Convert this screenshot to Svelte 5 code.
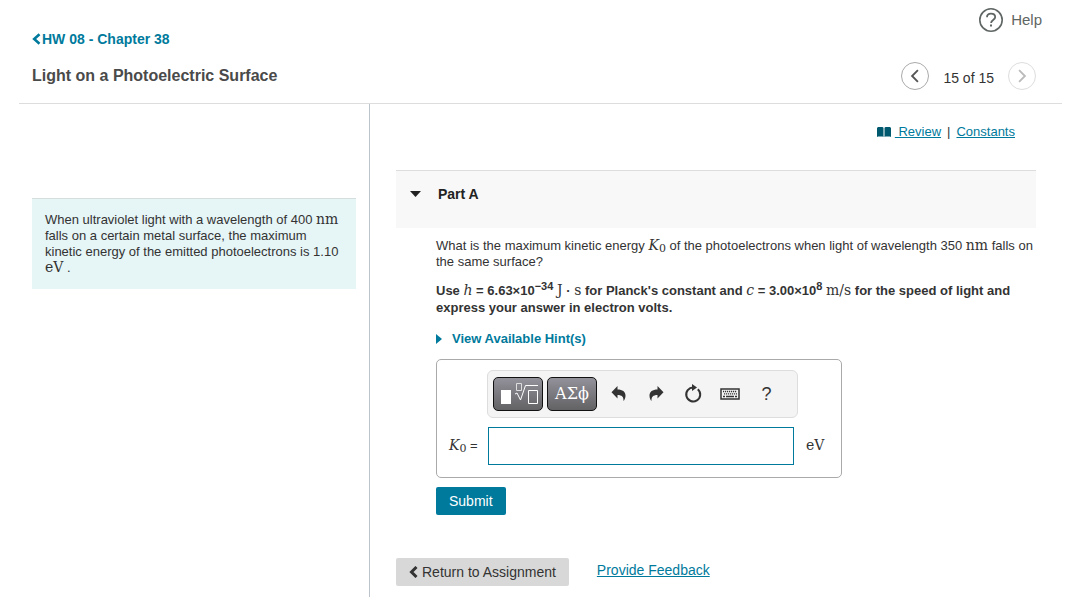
<!--
	Assignment item page: header with item navigation, problem statement on the
	left and the answer form for Part A on the right.
-->
<script lang="ts">
	let answer = $state('');
	let open = $state(true);
</script>

{#snippet chevron(dir: 'left' | 'right', size: number, width: number)}
	<svg class="chevron" width={size} height={size} viewBox="0 0 12 12" aria-hidden="true">
		<path
			d={dir === 'left' ? 'M8.500 1 3.500 6l5 5' : 'M3.500 1l5 5-5 5'}
			fill="none"
			stroke="currentColor"
			stroke-width={width}
		/>
	</svg>
{/snippet}

<div class="page">
	<header class="header">
		<div class="header__titles">
			<a class="back" href="#assignment">
				<svg width="10" height="12" viewBox="0 0 10 12" aria-hidden="true">
					<path d="M7.500 1.200 2.200 6l5.300 4.800" fill="none" stroke="currentColor" stroke-width="2.600" />
				</svg>
				HW 08 - Chapter 38
			</a>
			<h1>Light on a Photoelectric Surface</h1>
		</div>
		<div class="header__side">
			<a class="help" href="#help">
				<svg width="24" height="24" viewBox="0 0 24 24" aria-hidden="true">
					<circle cx="12" cy="12" r="11.200" fill="none" stroke="currentColor" stroke-width="1.600" />
					<path
						d="M8 9.200C8 6.900 9.600 5.600 12 5.600s4.200 1.300 4.200 3.400c0 2.900-4.100 3.100-4.100 6"
						fill="none"
						stroke="currentColor"
						stroke-width="1.800"
					/>
					<path d="M11 16.600h2v2h-2z" fill="currentColor" />
				</svg>
				Help
			</a>
			<nav class="pager" aria-label="Items">
				<button class="pager__btn" aria-label="Previous item">{@render chevron('left', 14, 1.6)}</button>
				<span class="pager__count">15 of 15</span>
				<button class="pager__btn" aria-label="Next item" disabled>
					{@render chevron('right', 14, 1.6)}
				</button>
			</nav>
		</div>
	</header>

	<div class="columns">
		<aside class="left">
			<p class="problem">
				When ultraviolet light with a wavelength of 400 <span class="math">nm</span> falls on a certain
				metal surface, the maximum kinetic energy of the emitted photoelectrons is 1.10
				<span class="math">eV</span> .
			</p>
		</aside>

		<main class="right">
			<nav class="resources" aria-label="Resources">
				<svg width="14" height="12" viewBox="0 0 14 12" aria-hidden="true">
					<path d="M0 2 1 1h4.500l1 .8V11l-1-.6H1L0 11z" fill="#00596f" />
					<path d="M14 2 13 1H8.500l-1 .8V11l1-.6H13l1 .6z" fill="#00596f" />
				</svg>
				<a href="#review">&nbsp;Review</a>
				<span class="resources__sep">|</span>
				<a href="#constants">Constants</a>
			</nav>

			<h2 class="part">
				<button class="part__toggle" aria-expanded={open} onclick={() => (open = !open)}>
					<svg width="12" height="6" viewBox="0 0 12 6" aria-hidden="true">
						<path d="M0 0h11L5.500 6z" fill="currentColor" />
					</svg>
					Part A
				</button>
			</h2>

			{#if open}
				<section class="body">
					<p class="question">
						What is the maximum kinetic energy <span class="math"><i>K</i><sub>0</sub></span> of the photoelectrons
						when light of wavelength 350 <span class="math">nm</span> falls on the same surface?
					</p>
					<p class="instructions">
						Use <i class="math">h</i> = 6.63×10<sup>−34</sup> <span class="math">J</span> ·
						<span class="math">s</span> for Planck's constant and <i class="math">c</i> =
						3.00×10<sup>8</sup> <span class="math">m/s</span> for the speed of light and express your
						answer in electron volts.
					</p>
					<button class="hints">
						<svg width="6" height="10" viewBox="0 0 6 10" aria-hidden="true">
							<path d="M0 0v10l6-5z" fill="currentColor" />
						</svg>
						View Available Hint(s)
					</button>

					<form class="answer" onsubmit={(e) => e.preventDefault()}>
						<div class="answer__box">
							<div class="toolbar" role="toolbar" aria-label="Equation tools">
								<button type="button" class="toolbar__dark" aria-label="Templates">
									<svg width="40" height="26" viewBox="0 0 40 26" fill="none" stroke="#fff" aria-hidden="true">
										<path d="M3 9h10v14H3z" fill="#fff" stroke="none" />
										<path d="M18.500 2.500h5v7h-5z" stroke="#ddd" />
										<path d="M17 13l2-1 3.500 7L27.500 4.500H40" />
										<path d="M30.500 9.500h9v13h-9z" />
									</svg>
								</button>
								<button type="button" class="toolbar__dark" aria-label="Symbols">ΑΣϕ</button>
								<button type="button" class="tool" aria-label="Undo">
									<svg width="16" height="16" viewBox="0 0 16 16" aria-hidden="true">
										<path d="M6.500 0v3.500c5 0 8 2.200 8 6 0 2.300-.7 4.200-2 5.500.3-4-1.600-6-6-6V12.500L.500 6.200z" fill="currentColor" />
									</svg>
								</button>
								<button type="button" class="tool" aria-label="Redo">
									<svg width="16" height="16" viewBox="0 0 16 16" aria-hidden="true">
										<path d="M9.500 0v3.500c-5 0-8 2.200-8 6 0 2.300.7 4.200 2 5.500-.3-4 1.600-6 6-6V12.500l6-6.300z" fill="currentColor" />
									</svg>
								</button>
								<button type="button" class="tool" aria-label="Reset">
									<svg width="18" height="20" viewBox="0 0 18 20" aria-hidden="true">
										<path d="M13.800 5.200A7 7 0 1 1 9.500 3.500" fill="none" stroke="currentColor" stroke-width="2" />
										<path d="M8 0v7l5-3.500z" fill="currentColor" />
									</svg>
								</button>
								<button type="button" class="tool" aria-label="Keyboard">
									<svg width="20" height="12" viewBox="0 0 20 12" fill="none" stroke="currentColor" aria-hidden="true">
										<path d="M1 1h18v10H1z" stroke-width="1.500" />
										<path d="M3 3.500h14M4 5.800h13" stroke-width="1.300" stroke-dasharray="1.200 .8" />
										<path d="M3 8.500h2m1 0h8m1 0h2" stroke-width="1.300" />
									</svg>
								</button>
								<button type="button" class="tool tool--text" aria-label="Tool help">?</button>
							</div>
							<div class="entry">
								<label class="entry__label" for="answer"><span class="math"><i>K</i><sub>0</sub></span> =</label>
								<input id="answer" type="text" autocomplete="off" bind:value={answer} />
								<span class="math entry__unit">eV</span>
							</div>
						</div>
						<button class="submit">Submit</button>
					</form>
				</section>
			{/if}

			<footer class="footer">
				<a class="return" href="#assignment">{@render chevron('left', 12, 3)}Return to Assignment</a>
				<a class="feedback" href="#feedback">Provide Feedback</a>
			</footer>
		</main>
	</div>
</div>

<style>
	:global(body) {
		background: #fff;
		color: #333;
		font-family: 'Liberation Sans', Arial, sans-serif;
		font-size: 13px;
		line-height: 16px;
	}

	.page,
	.page * {
		box-sizing: border-box;
	}

	.page {
		display: flex;
		flex-direction: column;
		min-height: 100vh;
		padding: 0 19px;
	}

	h1,
	h2,
	p {
		margin: 0;
	}

	button {
		margin: 0;
		padding: 0;
		border: 0;
		background: none;
		color: inherit;
		font: inherit;
		cursor: pointer;
	}

	a {
		color: #007a9c;
	}

	.chevron {
		flex: none;
	}

	/* Formula text, kept from stretching the lines it sits in */
	.math {
		font-family: 'DejaVu Serif', serif;
		font-size: 14px;
		font-weight: 400;
		line-height: 0;
	}

	sub,
	sup {
		font-size: 11px;
		line-height: 0;
	}

	sub {
		vertical-align: -2px;
	}

	sup {
		vertical-align: 5px;
	}

	.header {
		display: flex;
		justify-content: space-between;
		border-bottom: 1px solid #ddd;
		padding: 8px 20px 13px 13px;
	}

	.header__titles {
		padding-top: 23px;
	}

	.back {
		display: flex;
		align-items: center;
		font-size: 14px;
		font-weight: 700;
		text-decoration: none;
	}

	h1 {
		margin-top: 19px;
		color: #4a4a4a;
		font-size: 16px;
		line-height: 20px;
	}

	.header__side {
		display: flex;
		flex-direction: column;
		align-items: flex-end;
		gap: 30px;
	}

	.help {
		display: flex;
		align-items: center;
		gap: 8px;
		color: #5f6663;
		font-size: 15px;
		text-decoration: none;
	}

	.pager {
		display: flex;
		align-items: center;
		gap: 14px;
		margin-right: 6px;
		font-size: 14px;
	}

	.pager__count {
		padding-top: 4px;
	}

	.pager__btn {
		display: flex;
		align-items: center;
		justify-content: center;
		width: 28px;
		height: 28px;
		border: 1px solid #aaa;
		border-radius: 50%;
		color: #555;
	}

	.pager__btn:disabled {
		border-color: #ddd;
		color: #bbb;
		cursor: default;
	}

	.columns {
		display: flex;
		flex: 1;
	}

	.left {
		flex: 0 0 351px;
		border-right: 1px solid #bcc3ca;
		padding: 94px 13px 0;
	}

	.problem {
		border-top: 1px solid #d5dedd;
		background: #e6f5f6;
		padding: 13px;
	}

	.right {
		flex: 1;
		min-width: 0;
		padding: 20px 26px 11px;
	}

	.resources {
		display: flex;
		align-items: center;
		justify-content: flex-end;
		padding-right: 21px;
	}

	.resources a {
		margin-left: 4px;
	}

	.resources__sep {
		margin: 0 2px 0 6px;
	}

	.part {
		margin-top: 30px;
		border-top: 1px solid #ddd;
		background: #f8f8f8;
		padding: 15px 14px 26px;
	}

	.part__toggle {
		display: flex;
		align-items: center;
		gap: 16px;
		color: #222;
		font-size: 14px;
		font-weight: 700;
	}

	.body {
		padding: 10px 0 0 40px;
	}

	.instructions {
		margin-top: 12px;
		font-weight: 700;
		line-height: 17px;
	}

	.hints {
		display: flex;
		align-items: center;
		gap: 10px;
		margin-top: 15px;
		color: #007a9c;
		font-weight: 700;
	}

	.answer__box {
		max-width: 406px;
		margin-top: 12px;
		border: 1px solid #aaa;
		border-radius: 5px;
		padding: 10px 16px 12px 12px;
	}

	.toolbar {
		display: flex;
		align-items: center;
		gap: 4px;
		width: 311px;
		height: 48px;
		margin-left: 38px;
		border: 1px solid #ddd;
		border-radius: 6px;
		background: #f4f4f4;
		padding: 0 5px;
	}

	.toolbar__dark {
		display: flex;
		align-items: center;
		justify-content: center;
		width: 50px;
		height: 34px;
		border: 1px solid #111;
		border-radius: 5px;
		background: linear-gradient(#93919a, #626264);
		color: #fff;
		font-family: 'DejaVu Serif', serif;
		font-size: 16px;
	}

	.tool {
		display: flex;
		align-items: center;
		justify-content: center;
		width: 33px;
		height: 34px;
		padding-left: 2px;
	}

	.tool--text {
		font-size: 18px;
	}

	.entry {
		display: flex;
		align-items: center;
		margin-top: 9px;
	}

	.entry__label {
		flex: 0 0 39px;
		white-space: nowrap;
	}

	.entry__unit {
		flex: 0 0 19px;
		padding-bottom: 2px;
	}

	.entry input {
		flex: 1;
		min-width: 0;
		height: 38px;
		margin: 0 12px 0 0;
		border: 1px solid #007a9c;
		padding: 0 8px;
		font: inherit;
	}

	.submit {
		margin-top: 9px;
		border-radius: 2px;
		background: #007a9c;
		padding: 6px 13px;
		color: #fff;
		font-size: 14px;
	}

	.footer {
		display: flex;
		align-items: flex-start;
		gap: 28px;
		margin-top: 43px;
		font-size: 14px;
	}

	.return {
		display: flex;
		align-items: center;
		gap: 2px;
		border-radius: 2px;
		background: #d8d8d8;
		padding: 6px 13px 6px 12px;
		color: #333;
		text-decoration: none;
	}

	.feedback {
		margin-top: 4px;
	}
</style>
